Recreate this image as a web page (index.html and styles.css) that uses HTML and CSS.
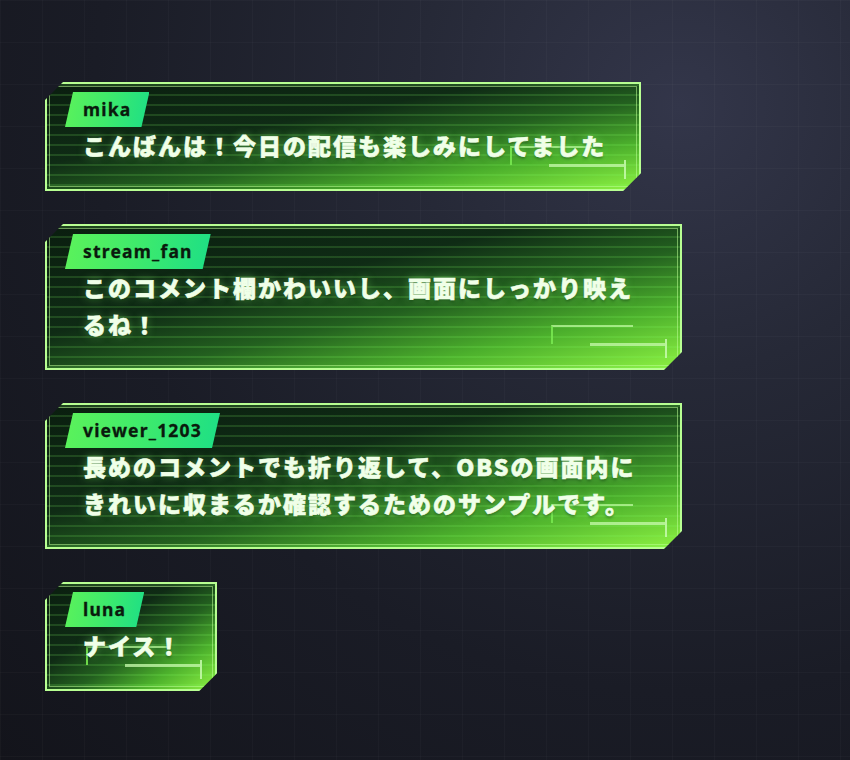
FILE: index.html
```html
<!DOCTYPE html>
<html lang="ja">
<head>
<meta charset="utf-8">
<title>Chat</title>
<link rel="stylesheet" href="styles.css">
</head>
<body>
<div class="chat">
  <div class="card">
    <span class="deco deco-a"></span><span class="deco deco-b"></span>
    <div class="name">mika</div>
    <p class="msg">こんばんは！今日の配信も楽しみにしてました</p>
  </div>
  <div class="card">
    <span class="deco deco-a"></span><span class="deco deco-b"></span>
    <div class="name">stream_fan</div>
    <p class="msg">このコメント欄かわいいし、画面にしっかり映えるね！</p>
  </div>
  <div class="card">
    <span class="deco deco-a"></span><span class="deco deco-b"></span>
    <div class="name">viewer_1203</div>
    <p class="msg">長めのコメントでも折り返して、OBSの画面内にきれいに収まるか確認するためのサンプルです。</p>
  </div>
  <div class="card">
    <span class="deco deco-a"></span><span class="deco deco-b"></span>
    <div class="name">luna</div>
    <p class="msg">ナイス！</p>
  </div>
</div>
</body>
</html>
```
FILE: styles.css
```css
html, body {
  margin: 0;
  padding: 0;
}
body {
  width: 850px;
  height: 760px;
  overflow: hidden;
  font-family: "Noto Sans CJK JP", "Noto Sans", sans-serif;
  background-color: #171821;
  background-image:
    linear-gradient(rgba(255,255,255,0.025) 1px, transparent 1px),
    linear-gradient(90deg, rgba(255,255,255,0.025) 1px, transparent 1px),
    radial-gradient(circle at 80% 14%, #33364a 0%, #262937 28%, #1a1c26 62%, #13141b 100%);
  background-size: 42px 42px, 42px 42px, 100% 100%;
}
.chat {
  display: flex;
  flex-direction: column;
  align-items: flex-start;
  gap: 33px;
  padding: 82px 0 0 45px;
}
.card {
  position: relative;
  box-sizing: border-box;
  max-width: 637px;
  padding: 8px 33px 25px 18px;
  border: 2px solid #b8ff92;
  clip-path: polygon(18px 0, 100% 0, 100% calc(100% - 18px), calc(100% - 18px) 100%, 0 100%, 0 18px);
  background-image:
    repeating-linear-gradient(to bottom, rgba(130,255,100,0.16) 0 2px, transparent 2px 10px),
    linear-gradient(to bottom right, #0a1e0f 0%, #0f2b15 38%, #23601f 58%, #4cb02c 78%, #8cf142 100%);
}
.card::before {
  content: "";
  position: absolute;
  inset: 2px;
  border: 1px solid rgba(190,255,150,0.55);
  pointer-events: none;
}
.deco {
  position: absolute;
  display: block;
}
.deco-a {
  right: 47px;
  bottom: 24px;
  width: 80px;
  height: 17px;
  border-top: 2px solid rgba(190,250,160,0.75);
  border-left: 2px solid rgba(120,232,80,0.9);
}
.deco-b {
  right: 13px;
  bottom: 10px;
  width: 75px;
  height: 19px;
  border-right: 2px solid rgba(200,250,175,0.85);
}
.deco-b::before {
  content: "";
  position: absolute;
  left: 0;
  right: 0;
  top: 4px;
  height: 3px;
  background: rgba(200,250,175,0.75);
}
.name {
  position: relative;
  display: block;
  width: fit-content;
  height: 35px;
  line-height: 35px;
  padding: 0 18px;
  font-family: "Noto Sans", sans-serif;
  font-weight: 700;
  font-size: 17.5px;
  letter-spacing: 1.2px;
  color: #0a1a0d;
  -webkit-text-stroke: 0.3px #0a1a0d;
  background: linear-gradient(100deg, #5cf25a 0%, #3eea6c 50%, #1ddf86 100%);
  clip-path: polygon(8px 0, 100% 0, calc(100% - 8px) 100%, 0 100%);
}
.msg {
  position: relative;
  margin: 0 0 0 18px;
  font-family: "Noto Sans CJK JP", sans-serif;
  font-weight: 900;
  font-size: 23px;
  line-height: 37px;
  letter-spacing: 2px;
  color: #f0ffe8;
  -webkit-text-stroke: 0.6px #f0ffe8;
  text-shadow: 0 0 8px rgba(140,255,120,0.5), 0 2px 3px rgba(0,30,0,0.5);
}
```
